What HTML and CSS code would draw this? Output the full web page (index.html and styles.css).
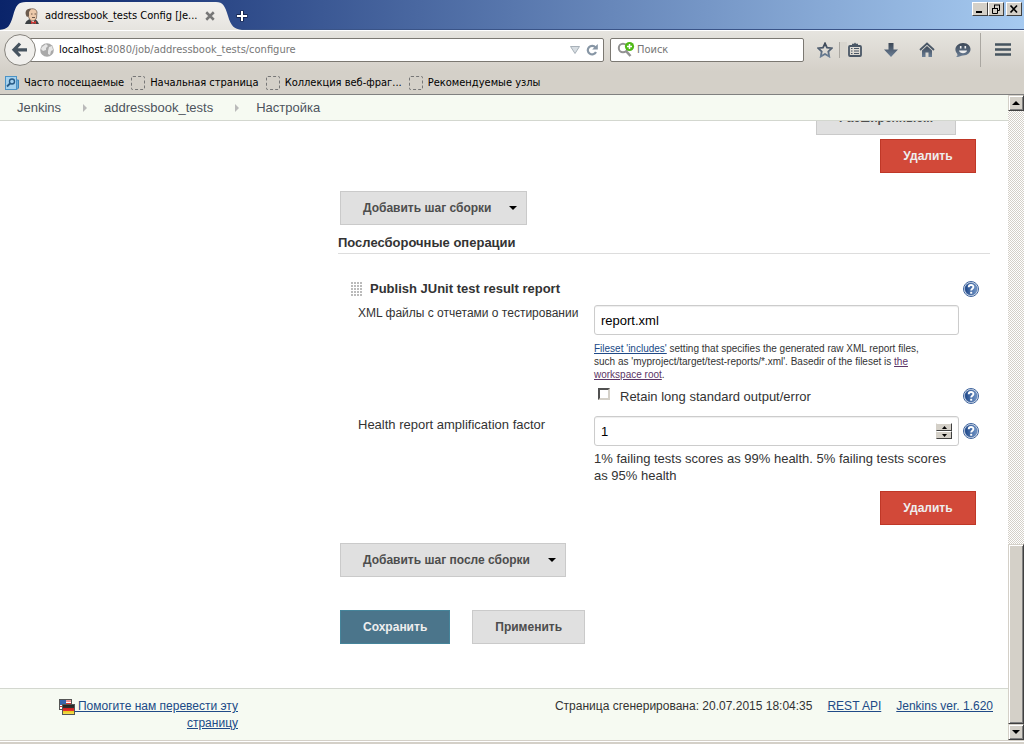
FILE: index.html
```html
<!DOCTYPE html>
<html lang="ru">
<head>
<meta charset="utf-8">
<title>addressbook_tests Config [Jenkins]</title>
<link rel="stylesheet" href="styles.css">
</head>
<body>
<svg class="defs" aria-hidden="true">
  <defs>
    <linearGradient id="toolGrad" x1="0" y1="0" x2="0" y2="1"><stop offset="0" stop-color="#3c4756"/><stop offset="1" stop-color="#6b7f96"/></linearGradient>
    <linearGradient id="tabGrad" x1="0" y1="0" x2="0" y2="1"><stop offset="0" stop-color="#f3f2ef"/><stop offset="1" stop-color="#e6e4df"/></linearGradient>
    <linearGradient id="helpGrad" x1="0" y1="0" x2="1" y2="0"><stop offset="0" stop-color="#1c4587"/><stop offset="1" stop-color="#7397c8"/></linearGradient>
    <linearGradient id="deGrad" x1="0" y1="0" x2="0" y2="1"><stop offset="0" stop-color="#222"/><stop offset=".38" stop-color="#333"/><stop offset=".38" stop-color="#c22"/><stop offset=".68" stop-color="#e33"/><stop offset=".68" stop-color="#e8c820"/><stop offset="1" stop-color="#f6e560"/></linearGradient>
    <symbol id="help" viewBox="0 0 16 16">
      <circle cx="8" cy="8" r="7.5" fill="#fff" stroke="#3c629c"/>
      <circle cx="8" cy="8" r="6.2" fill="url(#helpGrad)" stroke="#5577ab" stroke-width=".6"/>
      <path d="M5.7 6.2C5.8 3.3 10.4 3.3 10.4 6C10.4 7.8 8.2 7.7 8.2 9.6" fill="none" stroke="#fff" stroke-width="1.9"/>
      <rect x="7.2" y="10.8" width="2" height="1.9" fill="#fff"/>
    </symbol>
  </defs>
</svg>
<div class="browser">
  <header class="titlebar">
    <div class="tab">
      <svg class="tab-shape" viewBox="0 0 242 30"><path d="M0 30C8 29 10 26 13 16C16 5 18 2 26 2H216C223 2 225 6 228 16C231 26 234 29 242 30Z" fill="url(#tabGrad)"/></svg>
      <svg class="icon16" viewBox="0 0 16 16"><path d="M1 16C2 13 4 11 8 11S13 12 15 16Z" fill="#3b3f42"/><path d="M6 11L9 16L11 10Z" fill="#fff"/><path d="M3 5C3 0 12-1 13 4L12.500 10C11 14 6 13 5 10Z" fill="#ecc9aa" stroke="#6b5648" stroke-width=".7"/><path d="M3 9C0 5 2 0 7 1L5 4L5 8Z" fill="#6b5a4d"/><path d="M7 6H8.500M10.500 6H12M8 9.500H11" stroke="#6b5648" fill="none"/><path d="M7 13L9.500 14L12 13V16L9.500 15L7 16Z" fill="#d33833"/></svg>
      <span class="tab-title">addressbook_tests Config [Je...</span>
      <button class="bare" aria-label="Закрыть вкладку"><svg class="icon8" viewBox="0 0 8 8"><path d="M1 1L7 7M7 1L1 7" stroke="#777" stroke-width="2"/></svg></button>
    </div>
    <button class="bare newtab" aria-label="Новая вкладка"><svg class="icon12" viewBox="0 0 12 12"><path d="M6 .5V11.500M.5 6H11.500" stroke="#17264f" stroke-width="4"/><path d="M6 1V11M1 6H11" stroke="#fff" stroke-width="2"/></svg></button>
    <div class="window-buttons">
      <button class="winbtn" aria-label="Свернуть"><svg viewBox="0 0 12 10"><path d="M2 8H8" stroke="#000" stroke-width="2"/></svg></button>
      <button class="winbtn" aria-label="Восстановить"><svg viewBox="0 0 12 10" fill="none" stroke="#000"><path d="M4 1H10M4.500 1V4M9.500 1V6.500H7M2 4.500H8M2.500 4V9.500H7.500V4"/></svg></button>
      <button class="winbtn winclose" aria-label="Закрыть"><svg viewBox="0 0 12 10"><path d="M2.500 1.500L9 8.500M9 1.500L2.500 8.500" stroke="#000" stroke-width="1.700"/></svg></button>
    </div>
  </header>

  <div class="navbar">
    <button class="bare back" aria-label="Назад"><svg viewBox="0 0 32 32"><circle cx="16" cy="16" r="15.400" fill="#f0efec" stroke="#85827c"/><path d="M16 9.500L10 15.800L16 22M10.500 15.800H23" fill="none" stroke="#46535f" stroke-width="3.200"/></svg></button>
    <div class="urlbar">
      <svg class="icon14" viewBox="0 0 14 14"><circle cx="7" cy="7" r="6.800" fill="#a9a9a9"/><path d="M2 4L6 1L8 3L6 5L6 7L3 8L1 6ZM9 4L12 3L13 7L11 8L10 12L8 11L8 8Z" fill="#e6e6e6"/></svg>
      <span class="url" role="textbox" aria-label="Адрес"><b>localhost</b>:8080/job/addressbook_tests/configure</span>
      <svg class="icon12" viewBox="0 0 12 12"><path d="M1.500 2.500H10.500L6 9.500Z" fill="#d7dde2" stroke="#a8b1b9"/></svg>
      <button class="bare" aria-label="Обновить"><svg class="icon12" viewBox="0 0 12 12"><path d="M9.500 3.500A4.300 4.300 0 1 0 10 8" fill="none" stroke="#8796a5" stroke-width="2.200"/><path d="M11.800 0V5.500H6.200Z" fill="#8796a5"/></svg></button>
    </div>
    <label class="search">
      <svg class="icon18" viewBox="0 0 18 18"><circle cx="6" cy="7" r="4.200" fill="none" stroke="#929292" stroke-width="2"/><path d="M9 10L13.500 15" stroke="#929292" stroke-width="2.600"/><circle cx="12.500" cy="5.500" r="4.600" fill="#4fb916"/><path d="M12.500 3V8M10 5.500H15" stroke="#fff" stroke-width="1.500"/></svg>
      <input type="search" placeholder="Поиск" aria-label="Поиск">
    </label>
    <div class="tools">
      <button class="bare" aria-label="Закладка"><svg class="icon16" viewBox="0 0 16 16"><path d="M8 1.500L10 5.700L14.800 6.200L11.300 9.500L12.200 14.500L8 12L3.800 14.500L4.700 9.500L1.200 6.200L6 5.700Z" fill="none" stroke="url(#toolGrad)" stroke-width="1.800"/></svg></button>
      <button class="bare lined" aria-label="Список закладок"><svg class="icon16" viewBox="0 0 16 16"><rect x="2" y="4" width="12" height="10" rx="1" fill="none" stroke="#4a5766" stroke-width="1.800"/><path d="M5 4V1.800H7L8 .5L9 1.800H11V4Z" fill="#4a5766"/><path d="M4 6.500H5.500M7 6.500H12M4 9H5.500M7 9H12M4 11.500H5.500M7 11.500H12" stroke="#4a5766"/></svg></button>
      <button class="bare" aria-label="Загрузки"><svg class="icon16" viewBox="0 0 16 16"><path d="M5.500 1H10.500V7.500H15L8 15L1 7.500H5.500Z" fill="url(#toolGrad)"/></svg></button>
      <button class="bare" aria-label="Домой"><svg class="icon16" viewBox="0 0 16 16"><path d="M1 8L8 1.500L15 8" fill="none" stroke="#4a5766" stroke-width="1.800"/><path d="M3 8.500L8 4L13 8.500V15H9.500V10.500H6.500V15H3Z" fill="url(#toolGrad)"/></svg></button>
      <button class="bare" aria-label="Чат"><svg class="icon16" viewBox="0 0 16 16"><path d="M8 1C18 1 18 13.500 8 13.500C6 13.500 4 15.500 1 15C3 14 2.500 12.500 2 11.500C-2 7 2 1 8 1Z" fill="url(#toolGrad)"/><path d="M4 8.500H12C11.500 12 4.500 12 4 8.500Z" fill="#eee"/><path d="M5.700 4V6.500M10.300 4V6.500" stroke="#eee" stroke-width="1.600"/></svg></button>
      <button class="bare menu" aria-label="Меню"><svg class="icon16" viewBox="0 0 16 16"><path d="M0 2.500H16M0 7.500H16M0 12.500H16" stroke="#46545f" stroke-width="2.600"/></svg></button>
    </div>
  </div>

  <nav class="bookmarks" aria-label="Панель закладок">
    <a href="#"><svg class="icon14" viewBox="0 0 14 14"><path d="M10 4H13.500V12L12 13.500H9Z" fill="#70abd5" stroke="#3b85ba"/><rect x=".5" y=".5" width="11" height="13" fill="#a6d2ee" stroke="#4b93c6"/><circle cx="7" cy="5.500" r="2.500" fill="none" stroke="#285b86" stroke-width="1.400"/><path d="M5 7.500L2 10.500" stroke="#285b86" stroke-width="1.800"/></svg>Часто посещаемые</a>
    <a href="#"><i class="blank"></i>Начальная страница</a>
    <a href="#"><i class="blank"></i>Коллекция веб-фраг...</a>
    <a href="#"><i class="blank"></i>Рекомендуемые узлы</a>
  </nav>

  <div class="viewport">
    <div class="page">
      <nav class="crumbs" aria-label="Навигация">
        <a href="#">Jenkins</a><i class="sep"></i><a href="#">addressbook_tests</a><i class="sep"></i><a href="#">Настройка</a>
      </nav>
      <div class="scroll">
        <main class="content">
          <form class="config">
            <div class="advanced"><button type="button" class="btn wide">Расширенные...</button></div>
            <div class="delete"><button type="button" class="btn danger">Удалить</button></div>
            <div class="add"><button type="button" class="btn drop">Добавить шаг сборки<i class="caret"></i></button></div>
            <h2>Послесборочные операции</h2>
            <div class="row title-row">
              <h3><svg class="grip" viewBox="0 0 12 14"><path d="M1 0V14M4 0V14M7 0V14M10 0V14" stroke="#bbb" stroke-width="2" stroke-dasharray="2 1"/></svg>Publish JUnit test result report</h3>
              <button type="button" class="bare" aria-label="Справка"><svg class="icon16"><use href="#help"/></svg></button>
            </div>
            <div class="row">
              <label for="xml" class="long">XML файлы с отчетами о тестировании</label>
              <div>
                <div class="field"><input id="xml" type="text" value="report.xml"></div>
                <p class="hint"><a href="#">Fileset 'includes'</a> setting that specifies the generated raw XML report files, such as 'myproject/target/test-reports/*.xml'. Basedir of the fileset is <a href="#" class="visited">the workspace root</a>.</p>
              </div>
            </div>
            <div class="row check-row">
              <div class="check"><input id="retain" type="checkbox"><label for="retain">Retain long standard output/error</label></div>
              <button type="button" class="bare help" aria-label="Справка"><svg class="icon16"><use href="#help"/></svg></button>
            </div>
            <div class="row">
              <label for="factor">Health report amplification factor</label>
              <div>
                <div class="field"><input id="factor" type="number" value="1"><span class="spin"><button type="button" aria-label="Больше"><svg viewBox="0 0 5 3"><path d="M2.500 0L5 3H0Z"/></svg></button><button type="button" aria-label="Меньше"><svg viewBox="0 0 5 3"><path d="M0 0H5L2.500 3Z"/></svg></button></span></div>
                <p class="note">1% failing tests scores as 99% health. 5% failing tests scores as 95% health</p>
              </div>
              <button type="button" class="bare help factor-help" aria-label="Справка"><svg class="icon16"><use href="#help"/></svg></button>
            </div>
            <div class="delete"><button type="button" class="btn danger">Удалить</button></div>
            <div class="add"><button type="button" class="btn drop">Добавить шаг после сборки<i class="caret"></i></button></div>
            <div class="actions"><button type="button" class="btn primary">Сохранить</button><button type="button" class="btn">Применить</button></div>
          </form>
        </main>
        <footer class="footer">
          <a href="#" class="translate"><svg class="icon16" viewBox="0 0 16 16"><rect x=".5" y=".5" width="12" height="10" fill="#fff" stroke="#555"/><path d="M1 7.500H6M6 2H12M6 4.500H12" stroke="#d33"/><rect x="1" y="1" width="6" height="5" fill="#3565ae"/><rect x="3.500" y="5.500" width="12" height="10" fill="url(#deGrad)" stroke="#555"/></svg> Помогите нам перевести эту страницу</a>
          <div class="meta"><span>Страница сгенерирована: 20.07.2015 18:04:35</span><a href="#">REST API</a><a href="#">Jenkins ver. 1.620</a></div>
        </footer>
      </div>
    </div>
    <div class="scrollbar" aria-hidden="true">
      <div class="bevel arrow"><svg viewBox="0 0 8 4"><path d="M4 0L8 4H0Z"/></svg></div>
      <div class="track"></div>
      <div class="bevel thumb"></div>
      <div class="bevel arrow"><svg viewBox="0 0 8 4"><path d="M0 0H8L4 4Z"/></svg></div>
    </div>
  </div>
  <div class="frame-bottom"></div>
</div>
</body>
</html>
```
FILE: styles.css
```css
* { box-sizing: border-box; }
body {
  margin: 0;
  font-family: "Liberation Sans", Arial, sans-serif;
  font-size: 13px;
  line-height: 17px;
  color: #333;
}
h2, h3, p { margin: 0; }
svg { display: block; flex: none; }
button, input { font-family: inherit; }
.defs { position: absolute; width: 0; height: 0; }
.bare { border: 0; padding: 0; background: none; flex: none; display: block; }
.icon8 { width: 10px; height: 10px; }
.icon12 { width: 12px; height: 12px; }
.icon14 { width: 14px; height: 14px; }
.icon16 { width: 16px; height: 16px; }
.icon18 { width: 18px; height: 18px; }

.browser { display: flex; flex-direction: column; height: 100vh; background: #d4d0c8; }
.titlebar, .navbar, .bookmarks {
  font-family: "DejaVu Sans Condensed", "DejaVu Sans", sans-serif;
  font-size: 11px;
  line-height: 14px;
  color: #000;
}

/* title bar */
.titlebar {
  display: flex;
  height: 30px;
  background: linear-gradient(to right, #0a246a, #a6caf0);
  box-shadow: inset 0 -1px #3a5488;
}
.tab { position: relative; display: flex; align-items: center; width: 236px; padding: 2px 0 0 24px; }
.tab > * { position: relative; }
.tab > .tab-shape { position: absolute; left: 0; top: 0; width: 242px; height: 30px; }
.tab-title { width: 158px; margin: 0 2px 0 5px; white-space: nowrap; overflow: hidden; }
.newtab { align-self: center; padding-top: 2px; }
.window-buttons { display: flex; margin-left: auto; padding: 2px 2px 0 0; }
.winbtn {
  width: 16px; height: 14px; padding: 1px;
  background: #d4d0c8;
  border: 1px solid; border-color: #fff #404040 #404040 #fff;
}
.winbtn svg { width: 12px; height: 10px; }
.winclose { margin-left: 2px; }

/* navigation toolbar */
.navbar {
  display: flex; align-items: center;
  height: 42px; padding: 0 13px 4px 4px;
  border-top: 1px solid #fff;
  background: linear-gradient(#e6e4df, #d4d0c8);
}
.back { position: relative; z-index: 1; width: 32px; height: 32px; margin-right: -8px; }
.urlbar, .search {
  display: flex; align-items: center;
  height: 24px;
  background: #fff;
  border: 1px solid #7b7872;
  border-radius: 2px;
}
.urlbar { flex: 3; gap: 5px; padding: 0 5px 0 11px; }
.url { flex: 1; color: #777; white-space: nowrap; overflow: hidden; }
.url b { font-weight: normal; color: #000; }
.search { flex: 0 1 194px; gap: 2px; margin-left: 6px; padding: 0 6px; }
.search input { flex: 1; min-width: 0; padding: 0; border: 0; outline: 0; background: none; font-size: 11px; }
.search input::placeholder { color: #757575; opacity: 1; }
.tools { display: flex; align-items: center; gap: 20px; margin-left: 13px; }
.lined { margin-left: -6px; box-shadow: -7px 0 #d9d6cf, -8px 0 #aaa7a1; }
.menu { padding: 9px 0 9px 14px; border-left: 1px solid #aaa7a1; margin-left: -11px; }

.bookmarks {
  display: flex; align-items: center; gap: 7px;
  height: 23px; padding: 0 5px;
  border-bottom: 1px solid #808080;
}
.bookmarks a { display: flex; align-items: center; gap: 5px; color: #000; text-decoration: none; white-space: nowrap; }
.blank { width: 14px; height: 14px; border: 1px dashed #777; border-radius: 2px; }

/* page and scroll bar */
.viewport { display: flex; flex: 1; min-height: 0; }
.page { display: flex; flex-direction: column; flex: 1; min-width: 0; background: #fff; }
.crumbs {
  display: flex; align-items: center; flex: none;
  height: 26px; padding: 0 17px;
  background: #f6faf2;
  border-bottom: 1px solid #d3d7cf;
}
.crumbs a { color: #4d545d; text-decoration: none; }
.sep { margin: 0 17px 0 22px; border: 4px solid transparent; border-left-color: #bababa; border-right: 0; }
.scroll { display: flex; flex-direction: column; justify-content: flex-end; flex: 1; min-height: 0; overflow: hidden; }
.content { flex: none; padding: 0 18px 44px 338px; }

.btn {
  display: flex; align-items: center; justify-content: center;
  height: 34px; padding: 0 22px;
  background: #e0e0e0; border: 1px solid #cacaca;
  color: #4d4d4d; font-size: 12px; font-weight: bold; white-space: nowrap;
}
.danger { min-width: 96px; background: #d24939; border-color: #bf3727; color: #eee; }
.primary { background: #4b758b; border-color: #45849a; color: #eee; }
.wide { min-width: 140px; }
.drop { padding-right: 9px; }
.caret { margin-left: 18px; border: 4px solid transparent; border-top-color: #000; border-bottom: 0; }
.advanced { display: flex; justify-content: flex-end; padding: 0 34px 4px 0; }
.delete { display: flex; justify-content: flex-end; padding: 0 14px 18px 0; }
.add { padding-left: 2px; }
.actions { display: flex; gap: 22px; padding: 33px 0 0 2px; }

h2 { margin-bottom: 25px; padding: 9px 0 2px; border-bottom: 1px solid #ddd; font-size: 13px; line-height: 17px; }
h3 { display: flex; align-items: center; gap: 7px; grid-column: span 2; font-size: 13px; line-height: 17px; }
.grip { width: 12px; height: 14px; }
.row {
  display: grid;
  grid-template-columns: 232px minmax(0, 1fr) 16px;
  column-gap: 4px;
  padding: 0 11px 0 20px;
}
.title-row { padding-left: 13px; align-items: center; height: 26px; padding-bottom: 7px; }
.row > label { white-space: nowrap; }
.row > .long { font-size: 12px; }
.field {
  display: flex; align-items: center;
  height: 30px; padding: 0 6px;
  border: 1px solid #ccc; border-radius: 3px;
  box-shadow: inset 0 1px 1px #eee;
}
.field input { flex: 1; min-width: 0; padding: 0; border: 0; outline: 0; background: none; font-size: 13px; color: #000; }
.field input[type="number"] { appearance: textfield; -moz-appearance: textfield; }
.field input::-webkit-inner-spin-button { appearance: none; display: none; }
.spin { display: grid; width: 16px; height: 16px; }
.spin button {
  display: grid; place-items: center; padding: 0; height: 8px;
  background: #d4d0c8; border: 1px solid; border-color: #fff #404040 #404040 #d4d0c8;
}
.spin svg { width: 5px; height: 3px; }
.hint { padding: 7px 20px 7px 0; font-size: 10px; line-height: 13px; }
.hint a, .footer a { color: #204a87; }
.hint .visited { color: #5c3566; }
.check { grid-column: 2; display: flex; gap: 10px; padding-left: 4px; }
.check input {
  appearance: none; width: 12px; height: 12px; margin: 0;
  background: #fff; border: 2px solid; border-color: #505050 #d4d0c8 #d4d0c8 #505050;
}
.check-row { height: 28px; }
.row .factor-help { margin-top: 7px; }
.row .help { align-self: start; }
.note { padding: 4px 0 7px; }

.footer {
  display: flex; justify-content: space-between; flex: none;
  height: 52px; padding: 9px 15px 0 50px;
  background: #f6faf2; border-top: 1px solid #d3d7cf;
  font-size: 12px; line-height: 17px;
}
.translate { width: 188px; text-align: right; }
.translate svg { display: inline-block; vertical-align: middle; }
.meta { display: flex; gap: 15px; }

.scrollbar { display: flex; flex-direction: column; width: 16px; }
.bevel {
  background: #d4d0c8;
  border: 1px solid; border-color: #d4d0c8 #404040 #404040 #d4d0c8;
  box-shadow: inset 1px 1px #fff, inset -1px -1px #808080;
}
.arrow { display: grid; place-items: center; height: 16px; flex: none; }
.arrow svg { width: 8px; height: 4px; }
.track { flex: 434; background: repeating-conic-gradient(#d4d0c8 0 25%, #fff 0 50%) 0 0 / 2px 2px; }
.thumb { flex: 179; }
.frame-bottom { flex: none; height: 4px; border-top: 1px solid #d4d0c8; box-shadow: inset 0 1px #fff; }
```
